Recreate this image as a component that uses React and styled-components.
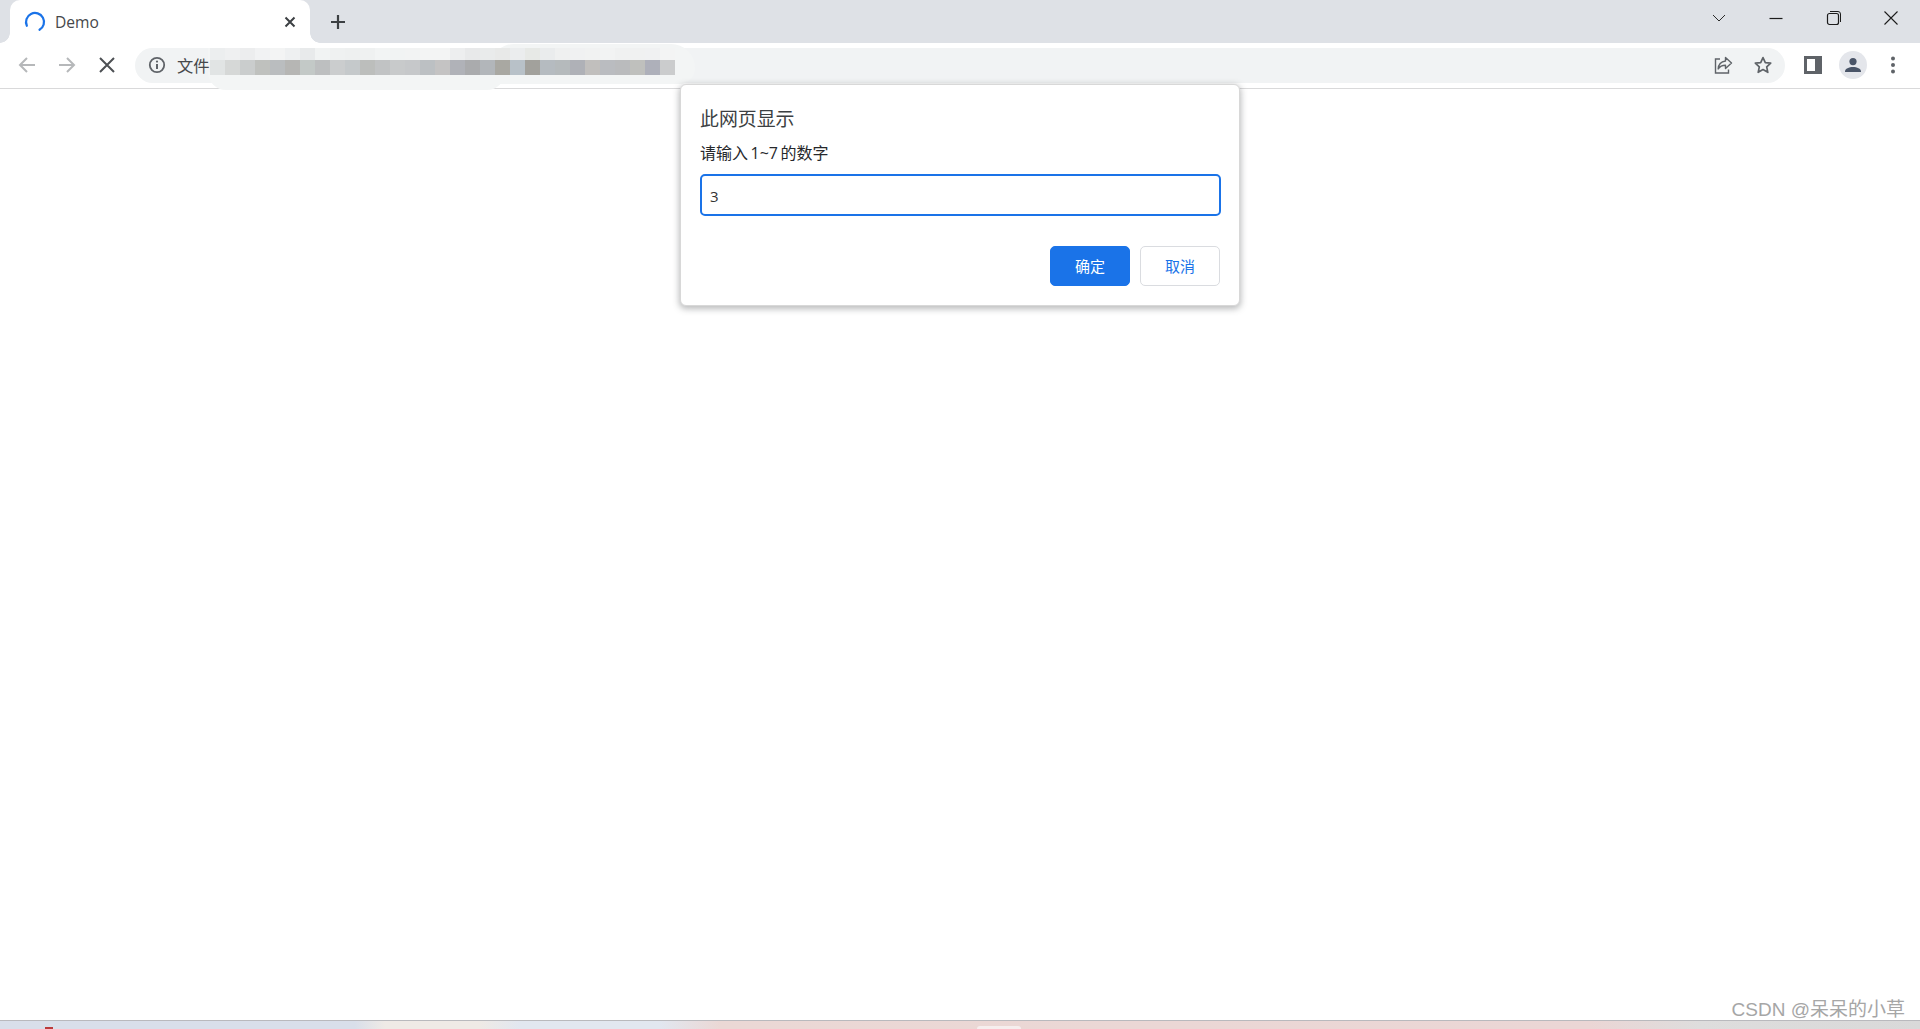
import React from "react";
import styled, { createGlobalStyle } from "styled-components";

const GlobalStyle = createGlobalStyle`
  html, body {
    margin: 0;
    padding: 0;
    height: 100%;
    background: #fff;
    overflow: hidden;
  }
  * {
    box-sizing: border-box;
  }
`;

const UI_FONT = `"Open Sans", "Noto Sans CJK SC", sans-serif`;

const Window = styled.div`
  position: relative;
  height: 100vh;
  display: flex;
  flex-direction: column;
  font-family: ${UI_FONT};
  background: #fff;
`;

const TabStrip = styled.div`
  height: 43px;
  flex: none;
  display: flex;
  align-items: stretch;
  padding-left: 10px;
  background: #dee1e6;
`;

const Tab = styled.div`
  position: relative;
  width: 300px;
  display: flex;
  align-items: center;
  padding: 0 11px 0 14px;
  background: #fff;
  border-radius: 10px 10px 0 0;

  &::before,
  &::after {
    content: "";
    position: absolute;
    bottom: 0;
    width: 10px;
    height: 10px;
  }
  &::before {
    left: -10px;
    background: radial-gradient(circle at 0 0, #dee1e6 9.5px, #fff 10px);
  }
  &::after {
    right: -10px;
    background: radial-gradient(circle at 100% 0, #dee1e6 9.5px, #fff 10px);
  }
`;

const TabTitle = styled.span`
  flex: 1;
  margin-left: 9px;
  font-size: 15.6px;
  color: #45474a;
`;

const NewTab = styled.div`
  width: 36px;
  margin-left: 10px;
  display: flex;
  align-items: center;
  justify-content: center;
`;

const WindowControls = styled.div`
  margin-left: auto;
  display: flex;
  align-items: flex-start;
`;

const WindowButton = styled.div`
  width: 57.5px;
  height: 36px;
  display: flex;
  align-items: center;
  justify-content: center;
`;

const Toolbar = styled.div`
  height: 46px;
  flex: none;
  display: flex;
  align-items: center;
  padding: 0 7px 1px;
  background: #fff;
  border-bottom: 1px solid #d9d9da;
`;

const IconButton = styled.div`
  width: 40px;
  height: 40px;
  flex: none;
  display: flex;
  align-items: center;
  justify-content: center;
`;

const AddressBar = styled.div`
  flex: 1;
  height: 35px;
  margin: 0 8px;
  padding: 0 2px 0 12px;
  display: flex;
  align-items: center;
  background: #f1f3f4;
  border-radius: 18px;
`;

const Scheme = styled.span`
  margin-left: 10px;
  font-size: 16.25px;
  color: #46484b;
`;

const AddressIcons = styled.div`
  margin-left: auto;
  display: flex;
`;

const Avatar = styled.div`
  width: 28px;
  height: 28px;
  border-radius: 50%;
  background: #e4e6eb;
  display: flex;
  align-items: center;
  justify-content: center;
`;

const Mosaic = styled.div`
  position: absolute;
  left: 210px;
  top: 48px;
  display: flex;
  flex-direction: column;
`;

const MosaicRow = styled.div`
  display: flex;
  height: ${(p) => p.$height}px;
`;

const MosaicCell = styled.div`
  width: 15px;
  background: ${(p) => p.$color};
`;

const Smudge = styled.div`
  position: absolute;
  left: ${(p) => p.$left}px;
  top: ${(p) => p.$top}px;
  width: ${(p) => p.$width}px;
  height: ${(p) => p.$height}px;
  background: #f3f5f5;
  border-radius: ${(p) => p.$radius};
`;

const Page = styled.main`
  flex: 1;
  background: #fff;
`;

const Dialog = styled.div`
  position: absolute;
  top: 84px;
  left: 680px;
  width: 560px;
  height: 222px;
  padding: 21px 19px 19px 19px;
  display: flex;
  flex-direction: column;
  background: #fff;
  border: 1px solid #d8d8d8;
  border-radius: 6px;
  box-shadow: 0 2px 6px 1px rgba(60, 64, 67, 0.35);
`;

const DialogTitle = styled.div`
  font-size: 18.9px;
  line-height: 26px;
  color: #3c3f42;
`;

const DialogMessage = styled.div`
  margin-top: 9px;
  font-size: 16px;
  line-height: 24px;
  color: #26282b;
`;

const Digits = styled.span`
  padding: 0 2.5px;
`;

const PromptInput = styled.input`
  margin-top: 9px;
  width: 521px;
  height: 42px;
  padding: 1px 8px 0;
  font-family: ${UI_FONT};
  font-size: 15px;
  color: #333;
  border: 2.5px solid #1a73e8;
  border-radius: 5px;
  outline: none;
`;

const DialogActions = styled.div`
  margin-top: 30px;
  display: flex;
  justify-content: flex-end;
  gap: 10px;
`;

const DialogButton = styled.button`
  width: 80px;
  height: 40px;
  padding: 0 0 2px;
  font-family: ${UI_FONT};
  font-size: 15px;
  border-radius: 5px;
  color: ${(p) => (p.$primary ? "#fff" : "#1a73e8")};
  background: ${(p) => (p.$primary ? "#1a73e8" : "#fff")};
  border: 1px solid ${(p) => (p.$primary ? "#1a73e8" : "#dadce0")};
`;

const Watermark = styled.div`
  position: absolute;
  right: 15px;
  bottom: 7px;
  font-family: "Liberation Sans", "Noto Sans CJK SC", sans-serif;
  font-size: 19px;
  line-height: 24px;
  color: #a6a6a6;
`;

const Taskbar = styled.div`
  height: 9px;
  flex: none;
  position: relative;
  border-top: 1px solid #b9b9bd;
  background: linear-gradient(
    90deg,
    #d9dfea 0,
    #d9dfea 355px,
    #efeae6 385px,
    #efeae6 480px,
    #e2e7f0 520px,
    #e2e7f0 660px,
    #ebd8d5 720px,
    #ebd6d5 1590px,
    #dedddd 1700px,
    #d9d9d9 1920px
  );
`;

const TaskbarTab = styled.div`
  position: absolute;
  left: 977px;
  top: 5px;
  width: 44px;
  height: 3px;
  background: #f6eeee;
  border-radius: 3px 3px 0 0;
`;

const TaskbarApp = styled.div`
  position: absolute;
  left: 45px;
  top: 6px;
  width: 8px;
  height: 2px;
  background: #bb3b3b;
`;

const MOSAIC_TOP = [
  "#eceeef", "#eff0f1", "#ecedee", "#f1f2f3", "#f3f4f4", "#eef0f1", "#e8eaeb", "#f1f3f3",
  "#eff1f1", "#eef0f0", "#eff1f1", "#f2f4f4", "#f1f3f3", "#f2f3f3", "#f3f4f4", "#f3f4f4",
  "#edeeef", "#e8e9ea", "#e9ebeb", "#e8e9e8", "#ebedee", "#e7e9e6", "#eaeced", "#eff0f0",
  "#f0f1f2", "#f1f2f2", "#f2f3f3", "#f0f1f1", "#f0f1f1", "#f0f1f2", "#f3f4f4",
];

const MOSAIC_COLORS = [
  "#e1e4e4", "#d6d8d7", "#cacdcd", "#bfc1be", "#babdbf", "#b6b6b4", "#c3c9c7", "#bdbfc0",
  "#cbcdce", "#c5c9cb", "#bcbebc", "#c1c3c4", "#c8cacb", "#c6c8ca", "#bcc0c3", "#c4c3c3",
  "#b0b2b8", "#aaabad", "#b2b6ba", "#a9a8a2", "#b8c1c8", "#a2a19c", "#b5bbc0", "#b5babc",
  "#afb1b7", "#c1bfbd", "#babcc0", "#babbbd", "#bfc0bd", "#aeb0ba", "#cbcccd",
];

const Glyph = ({ size = 24, children, ...rest }) => (
  <svg width={size} height={size} viewBox={`0 0 ${size} ${size}`} fill="none" {...rest}>
    {children}
  </svg>
);

const Spinner = () => (
  <Glyph size={22}>
    <path d="M2.85 14.8A9 9 0 1 1 15.5 18.8" stroke="#1a73e8" strokeWidth="2.2" strokeLinecap="round" />
  </Glyph>
);

export default function App() {
  return (
    <Window>
      <GlobalStyle />
      <TabStrip>
        <Tab>
          <Spinner />
          <TabTitle>Demo</TabTitle>
          <Glyph size={18}>
            <path d="M4.5 4.5l9 9M13.5 4.5l-9 9" stroke="#3c4043" strokeWidth="2" />
          </Glyph>
        </Tab>
        <NewTab>
          <Glyph size={18}>
            <path d="M9 2v14M2 9h14" stroke="#3c4043" strokeWidth="2.2" />
          </Glyph>
        </NewTab>
        <WindowControls>
          <WindowButton>
            <Glyph size={16}>
              <path d="M2 5l6 6 6-6" stroke="#2b2b2b" strokeWidth="1" />
            </Glyph>
          </WindowButton>
          <WindowButton>
            <Glyph size={16}>
              <path d="M1.5 8.5h13" stroke="#1c1c1c" strokeWidth="1.2" />
            </Glyph>
          </WindowButton>
          <WindowButton>
            <Glyph size={16}>
              <rect x="1.5" y="3.5" width="11" height="11" rx="2" stroke="#1c1c1c" strokeWidth="1.2" />
              <path d="M4 1.5h8a2.5 2.5 0 0 1 2.5 2.5v8" stroke="#1c1c1c" strokeWidth="1" />
            </Glyph>
          </WindowButton>
          <WindowButton>
            <Glyph size={16}>
              <path d="M1.5 1.5l13 13M14.5 1.5l-13 13" stroke="#1c1c1c" strokeWidth="1.1" />
            </Glyph>
          </WindowButton>
        </WindowControls>
      </TabStrip>

      <Toolbar>
        <IconButton>
          <Glyph size={20}>
            <path d="M18 10H3M10 3l-7 7 7 7" stroke="#b6b8ba" strokeWidth="2" />
          </Glyph>
        </IconButton>
        <IconButton>
          <Glyph size={20}>
            <path d="M2 10h15M10 3l7 7-7 7" stroke="#b6b8ba" strokeWidth="2" />
          </Glyph>
        </IconButton>
        <IconButton>
          <Glyph size={20}>
            <path d="M3 3l14 14M17 3L3 17" stroke="#4d5054" strokeWidth="2" />
          </Glyph>
        </IconButton>
        <AddressBar>
          <Glyph size={20}>
            <circle cx="10" cy="10" r="7.2" stroke="#5f6368" strokeWidth="1.8" />
            <path d="M10 9v5" stroke="#5f6368" strokeWidth="2" />
            <circle cx="10" cy="6.6" r="1.1" fill="#5f6368" />
          </Glyph>
          <Scheme>文件</Scheme>
          <AddressIcons>
            <IconButton>
              <Glyph size={20}>
                <path d="M7 4H2.5v14h13v-3.5" stroke="#5f6368" strokeWidth="1.4" />
                <path d="M12.5 2.5l6 5.5-6 5.5V10.3C9 10.3 6.8 11.4 5.2 14c.2-4.4 3-7.4 7.3-8z" stroke="#5f6368" strokeWidth="1.4" strokeLinejoin="round" />
              </Glyph>
            </IconButton>
            <IconButton>
              <Glyph size={20}>
                <path d="M10 2.6l2.3 5 5.4.6-4 3.7 1.1 5.4L10 14.6l-4.8 2.7 1.1-5.4-4-3.7 5.4-.6z" stroke="#5f6368" strokeWidth="1.7" strokeLinejoin="round" />
              </Glyph>
            </IconButton>
          </AddressIcons>
        </AddressBar>
        <IconButton>
          <Glyph size={18}>
            <path fillRule="evenodd" clipRule="evenodd" d="M0 0h18v18H0zM3 3v12h8V3z" fill="#5f6368" />
          </Glyph>
        </IconButton>
        <IconButton>
          <Avatar>
            <Glyph size={18}>
              <circle cx="9" cy="5.6" r="3.6" fill="#4a5568" />
              <path d="M1 15.5c0-3 4-4.6 8-4.6s8 1.6 8 4.6V16H1z" fill="#4a5568" />
            </Glyph>
          </Avatar>
        </IconButton>
        <IconButton>
          <Glyph size={20}>
            <circle cx="10" cy="3.5" r="2" fill="#5f6368" />
            <circle cx="10" cy="10" r="2" fill="#5f6368" />
            <circle cx="10" cy="16.5" r="2" fill="#5f6368" />
          </Glyph>
        </IconButton>
      </Toolbar>

      <Page />

      <Smudge $left={208} $top={48} $width={400} $height={12} $radius="0" />
      <Smudge $left={208} $top={72} $width={297} $height={18} $radius="0 0 30px 30px" />
      <Smudge $left={490} $top={44} $width={205} $height={40} $radius="30px 30px 20px 0" />
      <Mosaic>
        <MosaicRow $height={12}>
          {MOSAIC_TOP.map((color, i) => (
            <MosaicCell key={i} $color={color} />
          ))}
        </MosaicRow>
        <MosaicRow $height={15}>
          {MOSAIC_COLORS.map((color, i) => (
            <MosaicCell key={i} $color={color} />
          ))}
        </MosaicRow>
      </Mosaic>

      <Dialog>
        <DialogTitle>此网页显示</DialogTitle>
        <DialogMessage>
          请输入<Digits>1~7</Digits>的数字
        </DialogMessage>
        <PromptInput defaultValue="3" />
        <DialogActions>
          <DialogButton $primary>确定</DialogButton>
          <DialogButton>取消</DialogButton>
        </DialogActions>
      </Dialog>

      <Watermark>CSDN @呆呆的小草</Watermark>

      <Taskbar>
        <TaskbarApp />
        <TaskbarTab />
      </Taskbar>
    </Window>
  );
}
